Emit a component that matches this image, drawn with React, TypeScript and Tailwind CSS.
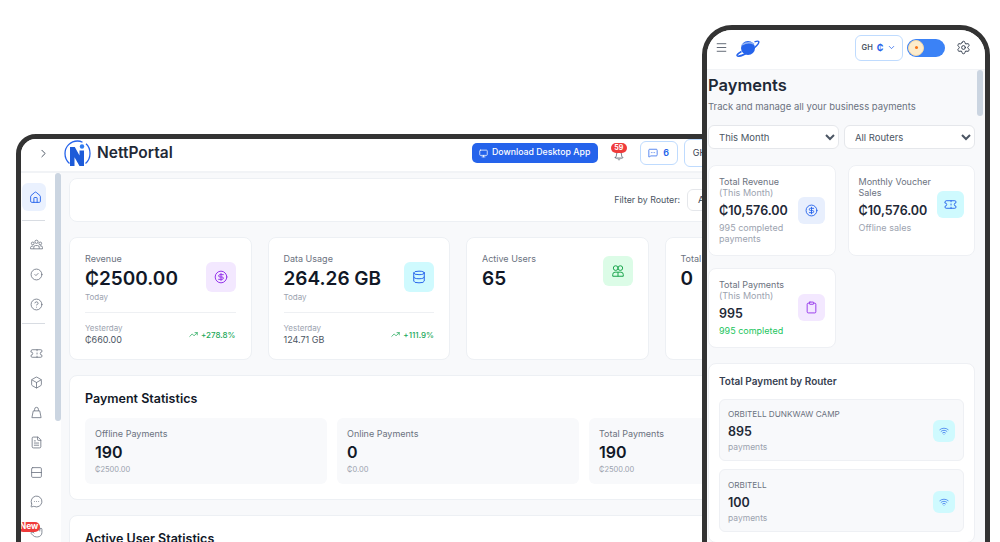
import React from "react";
import {
  Bell,
  Box,
  ChevronDown,
  ChevronRight,
  CircleCheck,
  CircleDollarSign,
  CircleHelp,
  Clipboard,
  Database,
  FileText,
  Hand,
  House,
  Menu,
  MessageCircleMore,
  MessageSquareMore,
  Monitor,
  Rows2,
  Settings,
  Ticket,
  TrendingUp,
  Users,
  Wifi,
} from "lucide-react";

type IconProps = { size?: number; strokeWidth?: number; className?: string };

const Logo = () => (
  <svg width="27" height="27" viewBox="0 0 27 27" fill="none">
    <path d="M5.500 23.500C2.500 21 1 17.500 1 13.500 1 6.600 6.600 1 13.500 1c2 0 3.500.4 5 1.200" stroke="#2563eb" strokeWidth="1.300" />
    <path d="M22 3.800c2.800 2.400 4 5.800 4 9.700 0 4-1.500 7.500-4.500 10" stroke="#2563eb" strokeWidth="1.300" />
    <path d="M6 7h4.800l4.700 8.500V10.500H20V26h-4.500l-5-8.800V26H6z" fill="#1d5bd8" />
    <circle cx="18" cy="6.500" r="2.200" fill="#2f7bf0" />
  </svg>
);

const Planet = () => (
  <svg width="24" height="18" viewBox="0 0 24 18" fill="none">
    <circle cx="12" cy="9" r="7" fill="#2563eb" />
    <path d="M6 6c3-2 8-3 12-1" stroke="#93b4f5" strokeWidth="1.500" />
    <path d="M5.500 12.500C2 14.500.5 16 1.200 16.800c1.200 1.200 7-1 12.500-4.500 5.500-3.500 9.800-8 9-9.600-.4-.8-2-.7-4.200.2" stroke="#2563eb" strokeWidth="1.500" />
  </svg>
);

// three people group, sidebar
const Group = ({ size = 13, strokeWidth = 1.5 }: IconProps) => (
  <svg width={size} height={size} viewBox="0 0 24 24" fill="none" stroke="currentColor" strokeWidth={strokeWidth}>
    <circle cx="12" cy="7" r="3" />
    <circle cx="5" cy="10" r="2.500" />
    <circle cx="19" cy="10" r="2.500" />
    <path d="M7 20v-3a3 3 0 0 1 3-3h4a3 3 0 0 1 3 3v3z" />
    <path d="M7 20H1v-2.500A3 3 0 0 1 4 15h2M17 20h6v-2.500a3 3 0 0 0-3-3h-2" />
  </svg>
);

// two heads over a shared base, active users card
const TwoUp = ({ size = 14, strokeWidth = 1.7 }: IconProps) => (
  <svg width={size} height={size} viewBox="0 0 24 24" fill="none" stroke="currentColor" strokeWidth={strokeWidth}>
    <circle cx="8" cy="7" r="4" />
    <circle cx="16" cy="7" r="4" />
    <path d="M3 21v-3a4 4 0 0 1 4-4h10a4 4 0 0 1 4 4v3z" />
    <path d="M12 14v7" />
  </svg>
);

const Bag = ({ size = 13, strokeWidth = 1.5 }: IconProps) => (
  <svg width={size} height={size} viewBox="0 0 24 24" fill="none" stroke="currentColor" strokeWidth={strokeWidth} strokeLinejoin="round">
    <path d="M6 9 3.500 21.500h17L18 9z" />
    <path d="M8.500 9V6a3.500 3.500 0 0 1 7 0v3" />
  </svg>
);

const sideTop = [Group, CircleCheck, CircleHelp];
const sideBottom = [Ticket, Box, Bag, FileText, Rows2, MessageCircleMore];

const SideSlot = ({ icon: Icon }: { icon: React.ElementType }) => (
  <div className="flex h-[29.75px] items-center justify-center text-[#6b7280]">
    <Icon size={13} strokeWidth={1.5} />
  </div>
);

const Sidebar = () => (
  <div className="relative flex w-[34px] shrink-0 flex-col overflow-hidden bg-white pr-[4px] pt-[10px]">
    <div className="ml-[1px] flex h-[28px] w-[24px] items-center justify-center rounded-md bg-[#eaf1fe] pl-[3px] text-[#2563eb]">
      <House size={13} strokeWidth={1.7} />
    </div>
    <div className="ml-[1px] mt-[9px] h-px w-[23px] bg-[#d8dce2]" />
    <div className="mt-[9px]">
      {sideTop.map((icon, i) => (
        <SideSlot key={i} icon={icon} />
      ))}
    </div>
    <div className="ml-[1px] mt-[4px] h-px w-[23px] bg-[#d8dce2]" />
    <div className="mt-[14px]">
      {sideBottom.map((icon, i) => (
        <SideSlot key={i} icon={icon} />
      ))}
      <div className="relative">
        <SideSlot icon={Hand} />
        <span className="absolute -left-[3px] top-[5px] flex h-[10px] w-[22px] items-center justify-center rounded-full bg-[#ef3b3b] text-[8.500px] font-bold text-white">
          New
        </span>
      </div>
    </div>
  </div>
);

interface StatCardProps {
  label: string;
  value: string;
  iconBox: string;
  icon: React.ElementType;
  today?: boolean;
  prev?: string;
  change?: string;
}

const StatCard = ({ label, value, iconBox, icon: Icon, today, prev, change }: StatCardProps) => (
  <div className="h-[123px] rounded-lg border border-[#edf0f4] bg-white px-[15px] pt-[15px]">
    <div className="flex justify-between">
      <div>
        <div className="text-[9px] leading-[12px] text-[#6b7280]">{label}</div>
        <div className="mt-[1px] whitespace-nowrap text-[19px] leading-[25px] font-semibold text-[#111827]">{value}</div>
        {today && <div className="mt-[1px] text-[8px] leading-[10px] text-[#9ca3af]">Today</div>}
      </div>
      <div className={`flex h-[30px] w-[30px] items-center justify-center rounded-md ${iconBox} ${today ? "mt-[9px]" : "mt-[3px]"}`}>
        <Icon size={14} strokeWidth={1.7} />
      </div>
    </div>
    {prev && (
      <>
        <div className="mt-[10px] h-px bg-[#eef0f3]" />
        <div className="mt-[10px] flex items-center justify-between">
          <div>
            <div className="text-[8px] leading-[10px] text-[#9ca3af]">Yesterday</div>
            <div className="mt-[1px] text-[9px] leading-[12px] text-[#4b5563]">{prev}</div>
          </div>
          <div className="flex items-center gap-[3px] text-[8px] font-medium text-[#22a85a]">
            <TrendingUp size={9} strokeWidth={2} />
            {change}
          </div>
        </div>
      </>
    )}
  </div>
);

const PayBox = ({ label, count, amount }: { label: string; count: string; amount: string }) => (
  <div className="h-[66px] rounded-md bg-[#f8f9fb] px-[10px] pt-[10px]">
    <div className="text-[9px] leading-[11px] text-[#6b7280]">{label}</div>
    <div className="mt-[2px] text-[16px] leading-[22px] font-semibold text-[#111827]">{count}</div>
    <div className="mt-[2px] text-[7.500px] leading-[10px] text-[#9ca3af]">{amount}</div>
  </div>
);

const Desktop = () => (
  <div className="absolute left-4 top-[134px] flex h-[500px] w-[844px] flex-col overflow-hidden rounded-tl-[20px] border-[5px] border-[#333333] bg-white">
    <header className="flex h-[34px] shrink-0 items-center border-b-2 border-[#f1f3f6] bg-white pb-[4px] pl-[16px]">
      <ChevronRight size={13} strokeWidth={1.8} className="text-[#4b5563]" />
      <div className="ml-[14px]">
        <Logo />
      </div>
      <span className="ml-[6px] text-[15.500px] font-semibold text-[#1f2937]">NettPortal</span>
      <button className="ml-[299px] flex h-[20px] w-[126px] items-center justify-center gap-[4px] rounded-[5px] bg-[#2563eb] text-[8.750px] font-medium text-white">
        <Monitor size={9} strokeWidth={2} />
        Download Desktop App
      </button>
      <div className="relative ml-[14px] flex w-[14px] justify-center text-[#374151]">
        <Bell size={10} strokeWidth={1.8} className="mt-[6px]" />
        <span className="absolute -top-[2px] left-[-1px] flex h-[10px] w-[16px] items-center justify-center rounded-full bg-[#ef3b3b] text-[7px] font-bold text-white">
          59
        </span>
      </div>
      <div className="ml-[14px] flex h-[24px] w-[38px] items-center justify-center gap-[5px] rounded-md border border-[#bfdbfe] text-[9px] font-semibold text-[#2563eb]">
        <MessageSquareMore size={10} strokeWidth={1.8} />6
      </div>
      <div className="ml-[6px] flex h-[28px] w-[48px] items-center rounded-md border border-[#bfdbfe] pl-[8px] text-[9px] text-[#374151]">
        GH
      </div>
    </header>
    <div className="flex min-h-0 flex-1">
      <Sidebar />
      <div className="w-[6px] shrink-0 bg-white">
        <div className="h-[248px] rounded-full bg-[#cbd5e1]" />
      </div>
      <main className="flex-1 overflow-hidden bg-[#f8f9fb] pl-[8px] pr-[8px] pt-[5px]">
        <div className="flex h-[44px] items-center justify-end rounded-lg border border-[#edf0f4] bg-white pr-[15px]">
          <span className="text-[8.800px] text-[#4b5563]">Filter by Router:</span>
          <div className="ml-[7px] flex h-[22px] w-[144px] items-center rounded-md border border-[#e5e7eb] pl-[10px] text-[9.500px] text-[#374151]">
            All Routers
          </div>
        </div>
        <div className="mt-[15px] grid grid-cols-4 gap-4">
          <StatCard
            label="Revenue"
            value="₵2500.00"
            today
            iconBox="bg-[#f3e8ff] text-[#9333ea]"
            icon={CircleDollarSign}
            prev="₵660.00"
            change="+278.8%"
          />
          <StatCard
            label="Data Usage"
            value="264.26 GB"
            today
            iconBox="bg-[#cffafe] text-[#2563eb]"
            icon={Database}
            prev="124.71 GB"
            change="+111.9%"
          />
          <StatCard label="Active Users" value="65" iconBox="bg-[#dcfce7] text-[#16a34a]" icon={TwoUp} />
          <StatCard label="Total Customers" value="0" iconBox="bg-[#dbeafe] text-[#2563eb]" icon={Users} />
        </div>
        <section className="mt-[15px] h-[125px] rounded-lg border border-[#edf0f4] bg-white px-[15px] pt-[15px]">
          <h2 className="text-[12.500px] leading-[16px] font-semibold text-[#111827]">Payment Statistics</h2>
          <div className="mt-[11px] grid grid-cols-3 gap-[10px]">
            <PayBox label="Offline Payments" count="190" amount="₵2500.00" />
            <PayBox label="Online Payments" count="0" amount="₵0.00" />
            <PayBox label="Total Payments" count="190" amount="₵2500.00" />
          </div>
        </section>
        <section className="mt-[15px] h-[125px] rounded-lg border border-[#edf0f4] bg-white px-[15px] pt-[15px]">
          <h2 className="text-[12.500px] leading-[16px] font-semibold text-[#111827]">Active User Statistics</h2>
        </section>
      </main>
    </div>
  </div>
);

interface PhoneCardProps {
  title: string;
  sub?: string;
  value: string;
  note: string;
  noteClass?: string;
  iconBox: string;
  icon: React.ElementType;
  height: string;
  iconOffset?: string;
}

const PhoneCard = ({ title, sub, value, note, noteClass, iconBox, icon: Icon, height, iconOffset }: PhoneCardProps) => (
  <div className={`flex items-center justify-between rounded-lg border border-[#eef0f4] bg-white pl-[10px] pr-[10px] ${height}`}>
    <div className="w-[80px]">
      <div className="text-[9px] leading-[11px] text-[#6b7280]">{title}</div>
      {sub && <div className="text-[9px] leading-[11px] text-[#9ca3af]">{sub}</div>}
      <div className="mt-[4px] whitespace-nowrap text-[12.500px] leading-[18px] font-semibold text-[#1f2937]">{value}</div>
      <div className={`mt-[2px] text-[9px] leading-[11px] ${noteClass ?? "text-[#9ca3af]"}`}>{note}</div>
    </div>
    <div className={`flex h-[27px] w-[27px] shrink-0 items-center justify-center rounded-md ${iconBox} ${iconOffset ?? ""}`}>
      <Icon size={13} strokeWidth={1.7} />
    </div>
  </div>
);

const RouterRow = ({ name, count, height }: { name: string; count: string; height: string }) => (
  <div className={`flex items-center justify-between rounded-md border border-[#eef0f4] bg-[#f8f9fb] pl-[8px] pr-[8px] pt-[2px] ${height}`}>
    <div>
      <div className="text-[8.200px] leading-[11px] text-[#6b7280]">{name}</div>
      <div className="mt-[3px] text-[12.500px] leading-[18px] font-semibold text-[#1f2937]">{count}</div>
      <div className="mt-[1px] text-[8.500px] leading-[11px] text-[#9ca3af]">payments</div>
    </div>
    <div className="flex h-[22px] w-[22px] items-center justify-center rounded-md bg-[#cffafe] text-[#2563eb]">
      <Wifi size={10} strokeWidth={1.6} />
    </div>
  </div>
);

const Phone = () => (
  <div className="absolute left-[702px] top-[25px] flex h-[560px] w-[288px] flex-col overflow-hidden rounded-t-[30px] border-[5px] border-[#333333] bg-white">
    <header className="flex h-[40px] shrink-0 items-center border-b border-[#f1f3f6] bg-white pb-[4px] pl-[8px]">
      <Menu size={13} strokeWidth={1.6} className="text-[#4b5563]" />
      <div className="ml-[8px]">
        <Planet />
      </div>
      <div className="ml-[95px] flex h-[26px] w-[48px] items-center justify-center gap-[4px] rounded-md border border-[#bfdbfe] text-[7.500px] font-semibold text-[#4b5563]">
        GH
        <span className="text-[9px] font-bold text-[#2563eb]">₵</span>
        <ChevronDown size={9} strokeWidth={2} className="text-[#2563eb]" />
      </div>
      <div className="ml-[4px] flex h-[18px] w-[38px] items-center rounded-full bg-[#3b82f6] pl-[1px]">
        <div className="flex h-[16px] w-[16px] items-center justify-center rounded-full border border-[#f4d9a8] bg-[#fdeccc]">
          <div className="h-[3px] w-[3px] rounded-full bg-[#f97316]" />
        </div>
      </div>
      <Settings size={15} strokeWidth={1.6} className="ml-[11px] text-[#374151]" />
    </header>
    <div className="flex min-h-0 flex-1 bg-[#f8f9fb]">
      <main className="w-[268px] pl-[1px] pt-[3px]">
        <h1 className="text-[16.500px] leading-[24px] font-semibold text-[#1f2937]">Payments</h1>
        <p className="mt-[3px] text-[9.500px] leading-[14px] text-[#6b7280]">Track and manage all your business payments</p>
        <div className="mt-[11px] grid grid-cols-2 gap-[5px]">
          <select className="h-[24px] rounded-md border border-[#e5e7eb] bg-white pl-[6px] font-['Inter'] text-[9.500px] text-[#4b5563]">
            <option>This Month</option>
          </select>
          <select className="h-[24px] rounded-md border border-[#e5e7eb] bg-white pl-[6px] font-['Inter'] text-[9.500px] text-[#4b5563]">
            <option>All Routers</option>
          </select>
        </div>
        <div className="mt-[16px] grid grid-cols-2 items-start gap-[12px]">
          <PhoneCard
            title="Total Revenue"
            sub="(This Month)"
            value="₵10,576.00"
            note="995 completed payments"
            iconBox="bg-[#e8effd] text-[#2563eb]"
            icon={CircleDollarSign}
            height="h-[91px] pb-[1px]"
          />
          <PhoneCard
            title="Monthly Voucher Sales"
            value="₵10,576.00"
            note="Offline sales"
            iconBox="bg-[#cffafe] text-[#2563eb]"
            icon={Ticket}
            height="h-[91px] !items-start pt-[10px]"
            iconOffset="mt-[15px]"
          />
          <PhoneCard
            title="Total Payments"
            sub="(This Month)"
            value="995"
            note="995 completed"
            noteClass="text-[#22c55e]"
            iconBox="bg-[#f3e8ff] text-[#9333ea]"
            icon={Clipboard}
            height="h-[80px] pb-[2px]"
          />
        </div>
        <section className="mt-[15px] rounded-lg border border-[#eef0f4] bg-white px-[10px] pt-[10px] pb-[10px]">
          <h2 className="text-[10px] leading-[14px] font-semibold text-[#374151]">Total Payment by Router</h2>
          <div className="mt-[11px] flex flex-col gap-[8px]">
            <RouterRow name="ORBITELL DUNKWAW CAMP" count="895" height="h-[62px]" />
            <RouterRow name="ORBITELL" count="100" height="h-[63px]" />
          </div>
        </section>
      </main>
      <div className="ml-[2px] w-[6px]">
        <div className="h-[46px] rounded-full bg-[#cbd5e1]" />
      </div>
    </div>
  </div>
);

export default function App() {
  return (
    <div className="relative h-[542px] w-[1000px] overflow-hidden bg-white font-['Inter',sans-serif]">
      <Desktop />
      <Phone />
    </div>
  );
}
